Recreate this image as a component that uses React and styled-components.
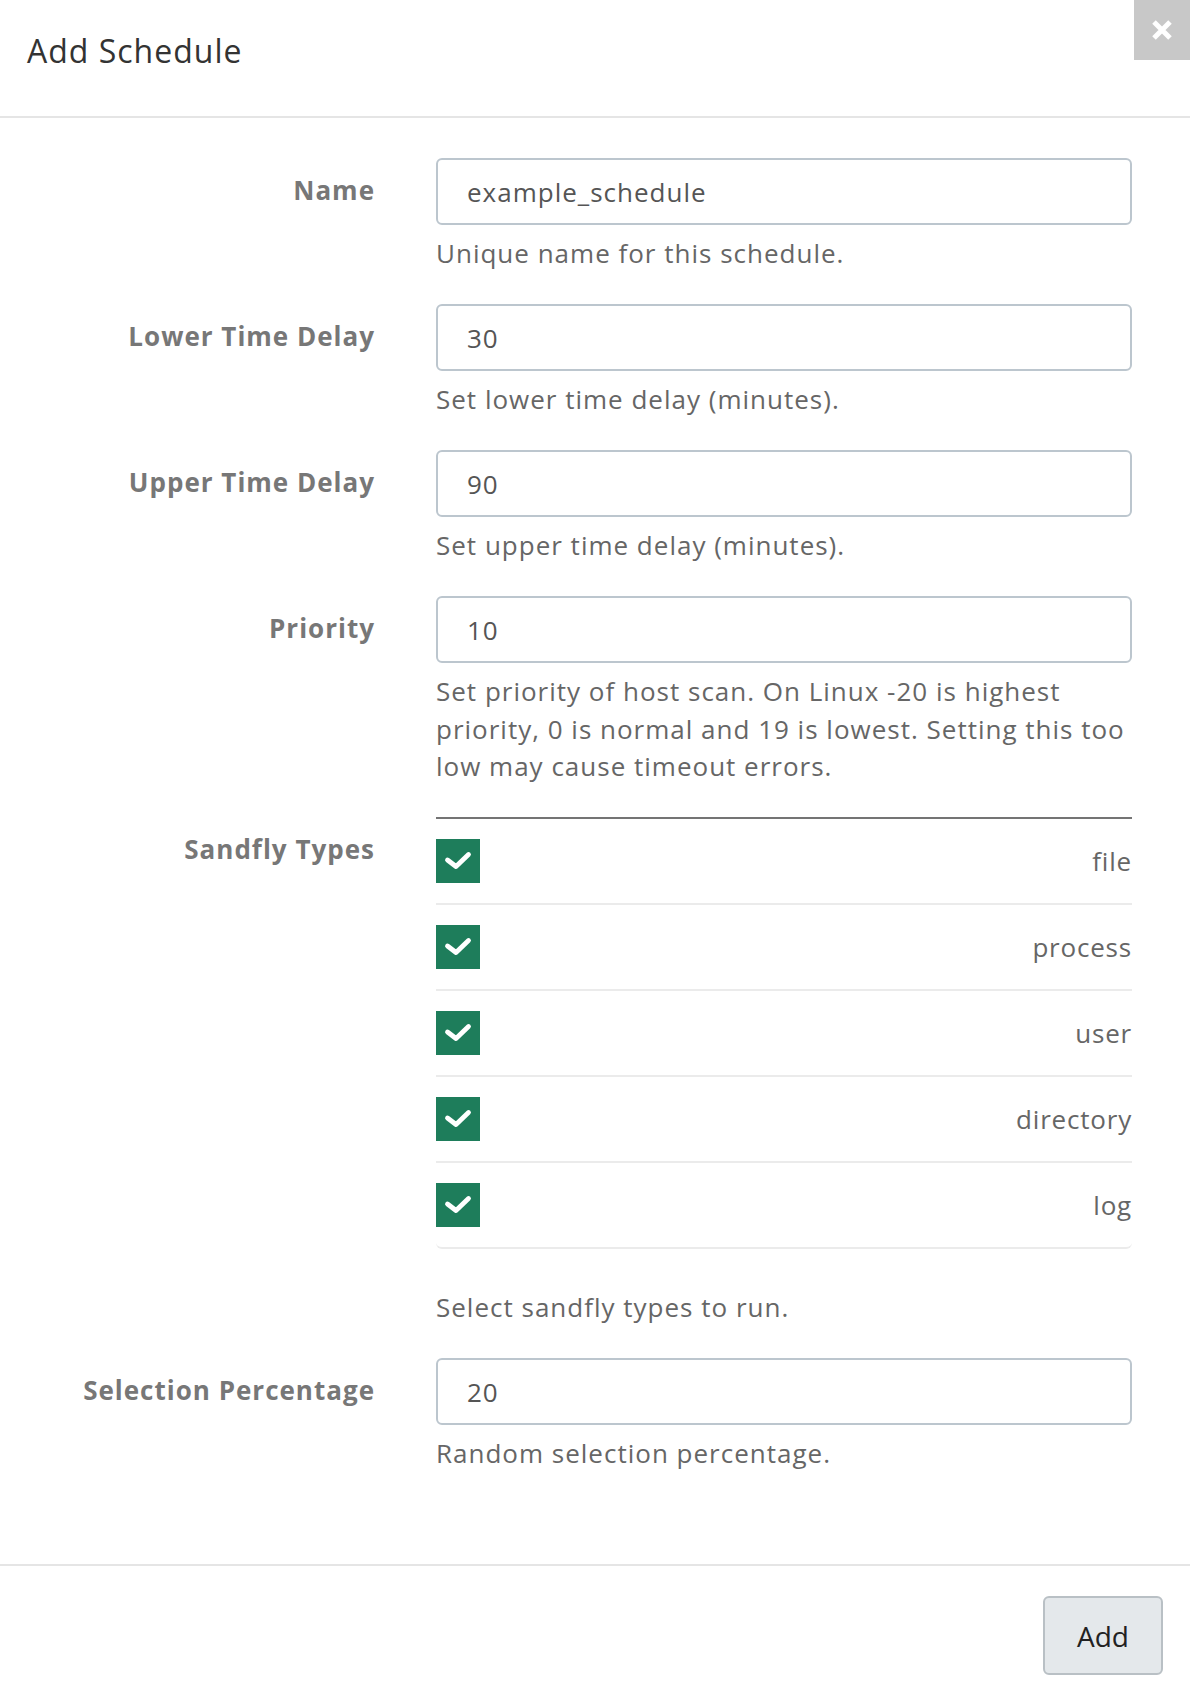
import React from "react";
import styled, { createGlobalStyle } from "styled-components";

const GlobalStyle = createGlobalStyle`
  html, body { margin: 0; padding: 0; background: #fff; }
  body { font-family: "Open Sans", "DejaVu Sans", sans-serif; }
  * { box-sizing: border-box; }
`;

const Modal = styled.div`
  width: 1190px;
  min-height: 1704px;
  background: #fff;
  display: flex;
  flex-direction: column;
`;

const Header = styled.div`
  position: relative;
  height: 118px;
  padding: 29px 27px 0;
  border-bottom: 2px solid #e5e5e5;
`;

const Title = styled.h4`
  margin: 0;
  font-size: 32px;
  line-height: 44px;
  font-weight: 400;
  letter-spacing: 1px;
  color: #333;
`;

const CloseButton = styled.button`
  position: absolute;
  top: 0;
  right: 0;
  width: 56px;
  height: 60px;
  border: 0;
  padding: 0;
  background: #c8c8c8;
  display: flex;
  align-items: center;
  justify-content: center;
  cursor: pointer;
`;

const Body = styled.div`
  padding: 40px 58px 60px 0;
`;

const FormRow = styled.div`
  display: grid;
  grid-template-columns: 375px 1fr;
  column-gap: 61px;
  margin-bottom: 31.5px;
`;

const Label = styled.label`
  text-align: right;
  font-size: 26px;
  line-height: 36px;
  font-weight: 700;
  letter-spacing: 1px;
  color: #777;
  padding-top: ${(p) => p.$offset ?? 14}px;
`;

const Field = styled.div`
  display: flex;
  flex-direction: column;
`;

const Input = styled.input`
  width: 100%;
  height: 67px;
  border: 2px solid #bcc6ce;
  border-radius: 6px;
  padding: 0 29px;
  font-family: "Open Sans", sans-serif;
  font-size: 26px;
  letter-spacing: 1px;
  color: #555;
  background: #fff;
  outline: none;
`;

const Help = styled.div`
  margin-top: ${(p) => p.$gap ?? 10}px;
  font-size: 26px;
  line-height: 37.5px;
  letter-spacing: 1px;
  color: #666;
`;

const TypeTable = styled.div`
  border-top: 2px solid #747474;
  display: flex;
  flex-direction: column;
`;

const TypeRow = styled.div`
  height: 86px;
  display: flex;
  align-items: center;
  justify-content: space-between;
  border-bottom: 2px solid #ebebeb;
  &:last-child { border-radius: 0 0 6px 6px; }
`;

const Check = styled.span`
  width: 44px;
  height: 44px;
  background: #1e7d5b;
  display: flex;
  align-items: center;
  justify-content: center;
`;

const TypeName = styled.span`
  font-size: 26px;
  letter-spacing: 0.8px;
  color: #666;
`;

const Footer = styled.div`
  border-top: 2px solid #e5e5e5;
  padding: 30px 27px 28px;
  display: flex;
  justify-content: flex-end;
`;

const AddButton = styled.button`
  width: 120px;
  height: 79px;
  background: #e4e8eb;
  border: 2px solid #b9c0c5;
  border-radius: 6px;
  font-family: "Open Sans", sans-serif;
  font-size: 28px;
  color: #222;
  cursor: pointer;
`;

const CheckIcon = () => (
  <svg width="44" height="44" viewBox="0 0 44 44">
    <polyline points="11.5,21 20,27.5 32.5,15.5" fill="none" stroke="#fff" strokeWidth="4.8" strokeLinecap="round" strokeLinejoin="round" />
  </svg>
);

const CloseIcon = () => (
  <svg width="22" height="22" viewBox="0 0 22 22">
    <path d="M3 3 L19 19 M19 3 L3 19" stroke="#fff" strokeWidth="5" strokeLinecap="butt" />
  </svg>
);

const types = ["file", "process", "user", "directory", "log"];

export default function App() {
  return (
    <>
      <GlobalStyle />
      <Modal>
        <Header>
          <Title>Add Schedule</Title>
          <CloseButton aria-label="Close"><CloseIcon /></CloseButton>
        </Header>
        <Body>
          <FormRow>
            <Label>Name</Label>
            <Field>
              <Input defaultValue="example_schedule" />
              <Help>Unique name for this schedule.</Help>
            </Field>
          </FormRow>
          <FormRow>
            <Label>Lower Time Delay</Label>
            <Field>
              <Input defaultValue="30" />
              <Help>Set lower time delay (minutes).</Help>
            </Field>
          </FormRow>
          <FormRow>
            <Label>Upper Time Delay</Label>
            <Field>
              <Input defaultValue="90" />
              <Help>Set upper time delay (minutes).</Help>
            </Field>
          </FormRow>
          <FormRow>
            <Label>Priority</Label>
            <Field>
              <Input defaultValue="10" />
              <Help>Set priority of host scan. On Linux -20 is highest priority, 0 is normal and 19 is lowest. Setting this too low may cause timeout errors.</Help>
            </Field>
          </FormRow>
          <FormRow>
            <Label $offset={14}>Sandfly Types</Label>
            <Field>
              <TypeTable>
                {types.map((t) => (
                  <TypeRow key={t}>
                    <Check><CheckIcon /></Check>
                    <TypeName>{t}</TypeName>
                  </TypeRow>
                ))}
              </TypeTable>
              <Help $gap={40}>Select sandfly types to run.</Help>
            </Field>
          </FormRow>
          <FormRow>
            <Label>Selection Percentage</Label>
            <Field>
              <Input defaultValue="20" />
              <Help>Random selection percentage.</Help>
            </Field>
          </FormRow>
        </Body>
        <Footer>
          <AddButton>Add</AddButton>
        </Footer>
      </Modal>
    </>
  );
}
